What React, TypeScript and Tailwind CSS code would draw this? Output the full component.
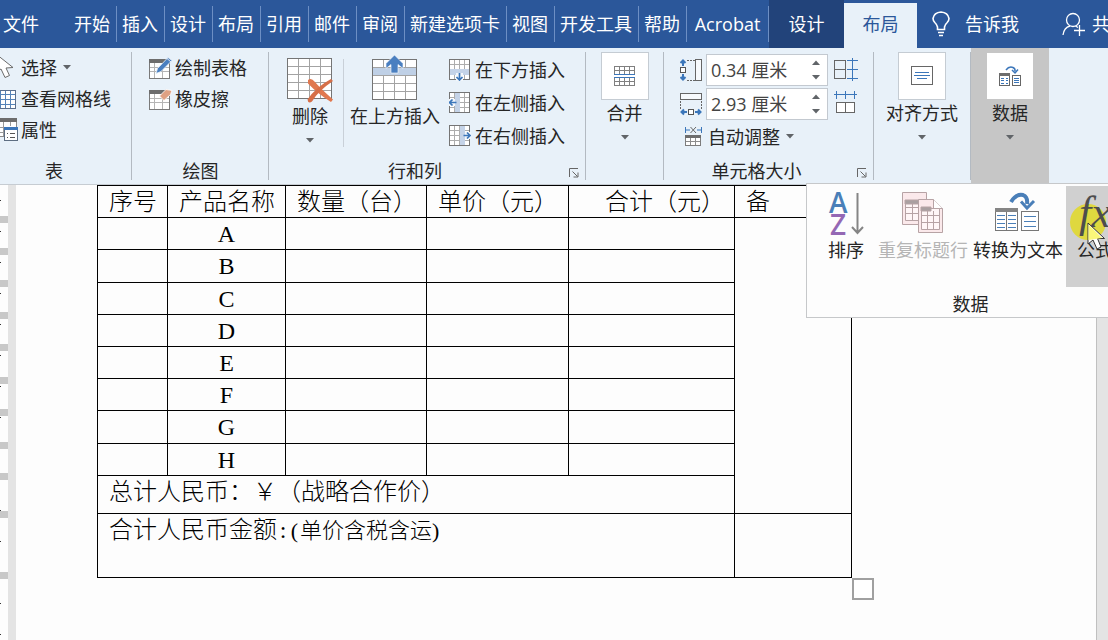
import type { ReactNode } from "react"

const tabs = ["开始", "插入", "设计", "布局", "引用", "邮件", "审阅", "新建选项卡", "视图", "开发工具", "帮助"]

const products = ["A", "B", "C", "D", "E", "F", "G", "H"]

// one entry per table row, the gray block below each is the row marker
const rulerRows = [
  "h-[31px]",
  "h-[25px]",
  "h-[25px]",
  "h-[25px]",
  "h-[25px]",
  "h-[26px]",
  "h-[25px]",
  "h-[26px]",
  "h-[24px]",
  "h-[31px]",
  "h-[54px]",
]

function Caret({ className = "" }: { className?: string }) {
  return (
    <svg width="8" height="5" viewBox="0 0 8 5" className={`shrink-0 fill-[#606468] ${className}`} aria-hidden="true">
      <path d="M0 0h8L4 4.5z" />
    </svg>
  )
}

function CursorIcon() {
  return (
    <svg width="18" height="22" viewBox="0 0 18 22" aria-hidden="true">
      <path d="M-4 -3L-4 15L1 12L5 20.500L9.500 18.500L6 11L13 10.500Z" fill="#fff" stroke="#6b6b6b" />
    </svg>
  )
}

function GridlinesIcon() {
  return (
    <svg width="18" height="20" viewBox="0 0 18 20" shapeRendering="crispEdges" aria-hidden="true">
      <path d="M-2 1.500H15.500V19.500H-2z" fill="#fff" stroke="#5b6f8c" />
      <path d="M0 5.500H15M0 10.500H15M0 15.500H15M0.500 2V19M5.500 2V19M10.500 2V19" stroke="#5583b8" fill="none" />
    </svg>
  )
}

function PropertiesIcon() {
  return (
    <svg width="18" height="23" viewBox="0 0 18 23" shapeRendering="crispEdges" aria-hidden="true">
      <path d="M-2 0.500H16.500V18.500H-2z" fill="#fff" stroke="#8a8a8a" />
      <path d="M0 0H17V4H0z" fill="#6d6d6d" />
      <path d="M0 9.500H5M0 14.500H5M3.500 4V18M10.500 4V8" stroke="#9a9a9a" />
      <path d="M4.500 9.500H17.500V22.500H4.500z" fill="#fff" stroke="#5e6e82" />
      <path d="M4 9H18V12H4z" fill="#3b76ba" />
      <path d="M7 15.500H8M10 15.500H15M7 19.500H8M10 19.500H15" stroke="#555" />
    </svg>
  )
}

function DrawTableIcon({ tool }: { tool: "pen" | "eraser" }) {
  return (
    <svg width="24" height="24" viewBox="0 0 24 24" aria-hidden="true">
      <g shapeRendering="crispEdges">
        <path d="M0.500 3.500H20.500V22.500H0.500z" fill="#fff" stroke="#7a7a7a" />
        <path d="M0 3H21V7H0z" fill="#6d6d6d" />
        <path d="M1 15.500H20M5.500 7V22M13.500 7V22M1 11.500H20" stroke="#b5b5b5" />
      </g>
      {tool === "pen" ? (
        <>
          <path d="M7 17.500L8.500 12.500L19 1.500L23 4.500L12 15.500Z" fill="#4a7fc0" stroke="#e8f1f9" strokeWidth="0.800" />
          <path d="M18 2.500L22 6" stroke="#fff" strokeWidth="0.800" />
        </>
      ) : (
        <path d="M10.500 9L17 2.500L23 3.500L21.500 7.500L15 13.500Z" fill="#dfa183" stroke="#fff" strokeWidth="0.800" />
      )}
    </svg>
  )
}

function DeleteIcon() {
  return (
    <svg width="46" height="46" viewBox="0 0 46 46" aria-hidden="true">
      <g shapeRendering="crispEdges" fill="none">
        <path d="M0.500 1.500H44.500V41.500H0.500z" fill="#fff" stroke="#757575" />
        <path d="M1 9.500H44M1 17.500H44M1 25.500H44M1 33.500H44M11.500 2V41M22.500 2V41M33.500 2V41" stroke="#a3a3a3" />
      </g>
      <path d="M21 23Q24 20 28 25Q33 31 46 42.500L44 45Q31 37 21 26.500Z" fill="#e0784f" />
      <path d="M46 24Q31 34 25 44.500Q21 47 20.500 42.500Q29 30 44 22Z" fill="#d66f48" />
    </svg>
  )
}

function InsertAboveIcon() {
  return (
    <svg width="46" height="46" viewBox="0 0 46 46" aria-hidden="true">
      <g shapeRendering="crispEdges" fill="none">
        <path d="M0.500 4.500H44.500V44.500H0.500z" fill="#fff" stroke="#757575" />
        <path d="M1 12H44V20H1z" fill="#bfd0e6" />
        <path d="M1 12.500H44M1 20.500H44M1 28.500H44M1 36.500H44M11.500 5V12M33.500 5V12M11.500 20V44M22.500 20V44M33.500 20V44" stroke="#a3a3a3" />
      </g>
      <path d="M22.500 0L31 8.500V13.500L26 9.500V18H19V9.500L14 13.500V8.500Z" fill="#4a7fc0" stroke="#fff" strokeWidth="0.600" />
    </svg>
  )
}

function InsertIcon({ side }: { side: "below" | "left" | "right" }) {
  return (
    <svg width="22" height="22" viewBox="0 0 22 22" aria-hidden="true">
      <g shapeRendering="crispEdges" fill="none">
        <path d="M0.500 0.500H20.500V20.500H0.500z" fill="#fff" stroke="#757575" />
        <path d="M1 5.500H20M1 10.500H20M1 15.500H20M5.500 1V20M10.500 1V20M15.500 1V20" stroke="#adadad" />
        {side === "below" && <path d="M1 10H20V16H1z" fill="#c4d3e8" />}
        {side === "left" && <path d="M6 1H11V20H6z" fill="#c4d3e8" />}
        {side === "right" && <path d="M11 1H16V20H11z" fill="#c4d3e8" />}
      </g>
      <g fill="none" strokeLinejoin="miter">
        {side === "below" && (
          <>
            <path d="M7 14H14V22H7z" fill="#f3f7fb" />
            <path d="M10.500 14V21M7.500 18L10.500 21L13.500 18" stroke="#3b76ba" strokeWidth="1.700" />
          </>
        )}
        {side === "left" && (
          <>
            <path d="M0 7H6V14H0z" fill="#f3f7fb" />
            <path d="M7.500 10.500H0.500M3.500 7.500L0.500 10.500L3.500 13.500" stroke="#3b76ba" strokeWidth="1.700" />
          </>
        )}
        {side === "right" && (
          <>
            <path d="M16 7H22V14H16z" fill="#f3f7fb" />
            <path d="M14.500 10.500H21M18 7.500L21 10.500L18 13.500" stroke="#3b76ba" strokeWidth="1.700" />
          </>
        )}
      </g>
    </svg>
  )
}

function MergeIcon() {
  return (
    <svg width="22" height="22" viewBox="0 0 22 22" shapeRendering="crispEdges" fill="none" aria-hidden="true">
      <path d="M0.500 1.500H21M0.500 5.500H21M5.500 1V9M10.500 1V9M15.500 1V9M0.500 1V9M20.500 1V9" stroke="#808080" />
      <path d="M0.500 16.500H21M0.500 20.500H21M5.500 12V21M10.500 12V21M15.500 12V21M0.500 12V21M20.500 12V21" stroke="#808080" />
      <path d="M0 9.500H21M0 12.500H21" stroke="#3b76ba" />
    </svg>
  )
}

function AlignIcon() {
  return (
    <svg width="22" height="20" viewBox="0 0 22 20" shapeRendering="crispEdges" fill="none" aria-hidden="true">
      <path d="M0.500 0.500H21.500V18.500H0.500z" stroke="#666" />
      <path d="M4 6.500H18M3 9.500H19M6 12.500H16" stroke="#3b76ba" />
    </svg>
  )
}

function RowHeightIcon() {
  return (
    <svg width="22" height="23" viewBox="0 0 22 23" fill="none" aria-hidden="true">
      <g shapeRendering="crispEdges">
        <path d="M7 1.500H15M7 21.500H15" stroke="#666" strokeDasharray="2 1" />
        <path d="M15.500 0.500H21.500V21.500H15.500z" stroke="#666" fill="#f7fafd" />
        <path d="M0.500 8.500H5.500V13.500H0.500z" stroke="#555" fill="#fff" />
      </g>
      <path d="M3 7V1.500M0.500 4L3 1.500L5.500 4M3 15V20.500M0.500 18L3 20.500L5.500 18" stroke="#3b76ba" strokeWidth="2" />
    </svg>
  )
}

function ColWidthIcon() {
  return (
    <svg width="22" height="23" viewBox="0 0 22 23" fill="none" aria-hidden="true">
      <g shapeRendering="crispEdges">
        <path d="M0.500 0.500H21.500V6.500H0.500z" stroke="#666" fill="#f7fafd" />
        <path d="M0.500 8V16M21.500 8V16" stroke="#666" strokeDasharray="2 1" />
        <path d="M8.500 16.500H13.500V21.500H8.500z" stroke="#555" fill="#fff" />
      </g>
      <path d="M7 19H1.500M4 16.500L1.500 19L4 21.500M15 19H20.500M18 16.500L20.500 19L18 21.500" stroke="#3b76ba" strokeWidth="2" />
    </svg>
  )
}

function DistributeRowsIcon() {
  return (
    <svg width="24" height="24" viewBox="0 0 24 24" shapeRendering="crispEdges" fill="none" aria-hidden="true">
      <path d="M0.500 2.500H11.500V20.500H0.500zM0.500 11.500H11.500" stroke="#666" />
      <path d="M13 2.500H24M13 11.500H24M13 20.500H24M18.500 0V23" stroke="#3b76ba" />
    </svg>
  )
}

function DistributeColsIcon() {
  return (
    <svg width="24" height="24" viewBox="0 0 24 24" shapeRendering="crispEdges" fill="none" aria-hidden="true">
      <path d="M2.500 11.500H20.500V21.500H2.500zM11.500 11.500V21.500" stroke="#666" fill="#fff" />
      <path d="M0 3.500H23M2.500 0V8M11.500 0V8M20.500 0V8" stroke="#3b76ba" />
    </svg>
  )
}

function AutoFitIcon() {
  return (
    <svg width="17" height="20" viewBox="0 0 17 20" fill="none" aria-hidden="true">
      <path d="M0.500 0V6M16.500 0V6M1 3H5M12 3H16" stroke="#3b76ba" />
      <path d="M5.500 0L11 6M11 0L5.500 6" stroke="#666" />
      <g shapeRendering="crispEdges">
        <path d="M0.500 8.500H15.500V18.500H0.500z" fill="#fff" stroke="#7d7d7d" />
        <path d="M0 8H16V11H0z" fill="#6d6d6d" />
        <path d="M1 14.500H15M5.500 11V18M10.500 11V18" stroke="#8d8d8d" />
      </g>
    </svg>
  )
}

function DataIcon() {
  return (
    <svg width="22" height="22" viewBox="0 0 22 22" fill="none" aria-hidden="true">
      <path d="M7 5Q10 1 14 2.500Q16.500 3.500 16 6.500" stroke="#3b76ba" strokeWidth="1.500" />
      <path d="M13 5L16 8L19 4.500" stroke="#3b76ba" strokeWidth="1.500" />
      <g shapeRendering="crispEdges">
        <path d="M0.500 8.500H10.500V20.500H0.500z" stroke="#666" />
        <path d="M0 8H11V11H0z" fill="#6d6d6d" />
        <path d="M2 13.500H5M7 13.500H9M2 15.500H5M7 15.500H9M2 18.500H5M7 18.500H9" stroke="#3b76ba" />
        <path d="M13.500 10.500H21.500V20.500H13.500z" stroke="#666" />
        <path d="M15 13.500H20M15 15.500H20M15 17.500H20" stroke="#3b76ba" />
      </g>
    </svg>
  )
}

function SortIcon() {
  return (
    <svg width="36" height="46" viewBox="0 0 36 46" fill="none" aria-hidden="true">
      <text x="1" y="21" fontFamily="Open Sans" fontSize="28" fontWeight="600" fill="#4a7fb8">A</text>
      <text x="2" y="43" fontFamily="Open Sans" fontSize="28" fontWeight="600" fill="#9468b4">Z</text>
      <path d="M29.500 1V40M24 35L29.500 41L35 35" stroke="#858585" strokeWidth="2" />
    </svg>
  )
}

function RepeatHeaderIcon() {
  return (
    <svg width="42" height="42" viewBox="0 0 42 42" fill="#fbe9eb" aria-hidden="true">
      <g stroke="#b7a3a5">
        <path d="M0.500 0.500H24.500V32.500H0.500z" />
        <path d="M3.500 8.500H20V28.500H3.500zM3.500 15.500H20M3.500 21.500H20M10.500 12V28" fill="#fff6f7" />
        <path d="M3 8H17V12H3z" fill="#aaa0a1" />
        <path d="M16.500 7.500H31.500L40.500 16.500V40.500H16.500z" />
        <path d="M31.500 7.500V16.500H40.500" fill="#fff" />
        <path d="M19.500 16.500H37.500V37.500H19.500zM19.500 23.500H37.500M19.500 30.500H37.500M25.500 19V37M31.500 19V37" fill="#fff6f7" />
        <path d="M19 15H29V19H19z" fill="#aaa0a1" />
      </g>
    </svg>
  )
}

function ToTextIcon() {
  return (
    <svg width="46" height="40" viewBox="0 0 46 40" fill="none" aria-hidden="true">
      <path d="M16 10Q21 1.500 28 3Q33 5 32 12" stroke="#4a7fb8" strokeWidth="4" />
      <path d="M26 9.500L32 16L39 9" stroke="#4a7fb8" strokeWidth="3" />
      <g shapeRendering="crispEdges">
        <path d="M0.500 16.500H22.500V38.500H0.500zM11.500 20V38" stroke="#777" fill="#fff" />
        <path d="M0 16H23V20H0z" fill="#858585" />
        <path d="M2 23.500H10M13 23.500H21M2 27.500H10M13 27.500H21M2 31.500H10M13 31.500H21M2 35.500H10M13 35.500H21" stroke="#4a7fb8" />
        <path d="M26.500 19.500H43.500V38.500H26.500z" stroke="#777" fill="#fff" />
        <path d="M29 24.500H41M29 29.500H41M29 34.500H41" stroke="#4a7fb8" />
      </g>
    </svg>
  )
}

function BulbIcon() {
  return (
    <svg width="18" height="26" viewBox="0 0 18 26" fill="none" stroke="#fff" strokeWidth="1.600" aria-hidden="true">
      <path d="M5.500 18.500V16Q5 13.500 2.800 11.500Q1 9.500 1 7.500Q2 1.500 9 1Q16 1.500 17 7.500Q17 9.500 15.200 11.500Q13 13.500 12.500 16V18.500Z" />
      <path d="M6 21.500H12M7 24.500H11" />
    </svg>
  )
}

function ShareIcon() {
  return (
    <svg width="24" height="24" viewBox="0 0 24 24" fill="none" stroke="#fff" strokeWidth="1.300" aria-hidden="true">
      <circle cx="11" cy="8" r="6.500" />
      <path d="M1 23Q2 15.500 8 14M13.500 14L16 15.500M17.500 13V24M12 18.500H23" />
    </svg>
  )
}

function Group({ label, width, launcher, children }: { label?: string; width: string; launcher?: boolean; children: ReactNode }) {
  return (
    <section className={`flex shrink-0 flex-col ${width}`}>
      <div className="flex flex-1">
        <div className="flex-1">{children}</div>
        <div className="-mb-[22px] mt-1 w-px bg-[#b3bac2]" />
      </div>
      {label && (
        <div className="flex h-[26px] items-center">
          <div className="flex-1 text-center">{label}</div>
          {launcher && (
            <button aria-label={`${label}设置`} className="mt-1 mr-[7px] pl-2">
              <svg width="10" height="10" viewBox="0 0 10 10" fill="none" stroke="#666" aria-hidden="true">
                <path d="M0.500 9V0.500H9M3.500 3.500L8.500 8.500M9 4.500V9H4.500" />
              </svg>
            </button>
          )}
        </div>
      )}
    </section>
  )
}

function SmallButton({ icon, iconWidth, label, caret }: { icon: ReactNode; iconWidth: string; label: string; caret?: boolean }) {
  return (
    <button className="flex h-[31px] items-center">
      <span className={`flex shrink-0 ${iconWidth}`}>{icon}</span>
      <span>{label}</span>
      {caret && <Caret className="ml-[6px]" />}
    </button>
  )
}

function TileButton({ icon, label, active }: { icon: ReactNode; label: string; active?: boolean }) {
  return (
    <button className="flex w-full flex-col items-center pt-1">
      <span className={`flex size-12 items-center justify-center border bg-white ${active ? "border-[#c6c6c6]" : "border-[#c5ccd3]"}`}>
        {icon}
      </span>
      <span className="h-7 leading-[26px]">{label}</span>
      <Caret className="mt-[7px]" />
    </button>
  )
}

function SizeField({ icon, label, value }: { icon: ReactNode; label: string; value: string }) {
  return (
    <div className="flex h-8 items-center">
      <span className="w-[26px]">{icon}</span>
      <div className="flex h-8 w-[122px] border border-[#c3c9d0] bg-white">
        <input aria-label={label} defaultValue={value} className="min-w-0 flex-1 bg-transparent pl-1 text-[#444] outline-none" />
        <div className="flex w-[22px] flex-col items-center justify-center gap-[10px]">
          <button aria-label={`增加${label}`}>
            <Caret className="block rotate-180" />
          </button>
          <button aria-label={`减少${label}`}>
            <Caret className="block" />
          </button>
        </div>
      </div>
    </div>
  )
}

function MenuItem({ icon, label, disabled, className = "w-[94px]" }: { icon: ReactNode; label: string; disabled?: boolean; className?: string }) {
  return (
    <button disabled={disabled} className={`relative flex h-[101px] shrink-0 flex-col items-center ${disabled ? "text-[#b5b5b5]" : ""} ${className}`}>
      <span className="flex h-[51px] items-start pt-[6px]">{icon}</span>
      <span className="leading-[26px] whitespace-nowrap">{label}</span>
    </button>
  )
}

function DataMenu() {
  return (
    <div className="absolute top-[135px] -left-[165px] z-10 border border-[#c6c8ca] bg-[#fdfdfd] pt-[2px]">
      <div className="flex gap-px px-[10px]">
        <MenuItem icon={<SortIcon />} label="排序" className="w-[58px]" />
        <MenuItem icon={<RepeatHeaderIcon />} label="重复标题行" disabled />
        <MenuItem icon={<ToTextIcon />} label="转换为文本" />
        <MenuItem
          icon={
            <>
              <span className="absolute top-[18px] left-1 size-9 rounded-full bg-[#dfd83f]" />
              <span className="relative font-['Liberation_Serif',serif] text-[44px] leading-[42px] text-[#4d4d4d] italic">fx</span>
              <svg width="20" height="30" viewBox="0 0 20 30" className="absolute top-9 left-[21px] z-10" aria-hidden="true">
                <path d="M1 1V22L6 18L10 27L14 25L10.500 16.500H17.500Z" fill="#fff" stroke="#333" />
                <path d="M1.500 2.500L15 16L1.500 18Z" fill="#faf77a" />
              </svg>
            </>
          }
          label="公式"
          className="w-[58px] bg-[#d0d0d0]"
        />
      </div>
      <div className="mt-[4px] h-[26px] text-center leading-[26px]">数据</div>
    </div>
  )
}

function TabBar() {
  return (
    <nav className="flex h-12 overflow-hidden bg-[#2b579a] whitespace-nowrap text-white">
      <button className="w-[69px] shrink-0 pl-[3px] text-left">文件</button>
      {tabs.map((tab) => (
        <button key={tab} className="my-[6px] shrink-0 border-r border-[#6d8fc4] pr-[6px] pl-[5px]">
          {tab}
        </button>
      ))}
      <button className="my-[6px] w-[82px] shrink-0 border-r border-[#6d8fc4]">Acrobat</button>
      <button className="w-[75px] shrink-0 bg-[#22437a]">设计</button>
      <button className="mt-[3px] w-[73px] shrink-0 bg-[#e8f1f9] pb-[3px] text-[#2b579a]">布局</button>
      <button className="ml-[15px] flex shrink-0 items-center gap-[15px]">
        <BulbIcon />
        告诉我
      </button>
      <button className="ml-auto flex w-[46px] shrink-0 items-center gap-[6px]">
        <span className="shrink-0">
          <ShareIcon />
        </span>
        共享
      </button>
    </nav>
  )
}

function Ribbon() {
  return (
    <div className="flex h-[137px] border-b border-[#c6ccd2] bg-[#e8f1f9] whitespace-nowrap">
      <Group label="表" width="w-[132px] [&>div:last-child]:pr-6">
        <div className="flex flex-col items-start pt-1">
          <SmallButton icon={<CursorIcon />} iconWidth="w-[21px]" label="选择" caret />
          <SmallButton icon={<GridlinesIcon />} iconWidth="w-[21px]" label="查看网格线" />
          <SmallButton icon={<PropertiesIcon />} iconWidth="w-[21px]" label="属性" />
        </div>
      </Group>
      <Group label="绘图" width="w-[137px]">
        <div className="flex flex-col items-start pt-1 pl-[17px]">
          <SmallButton icon={<DrawTableIcon tool="pen" />} iconWidth="w-[26px]" label="绘制表格" />
          <SmallButton icon={<DrawTableIcon tool="eraser" />} iconWidth="w-[26px]" label="橡皮擦" />
        </div>
      </Group>
      <Group label="行和列" width="w-[317px]" launcher>
        <div className="flex pl-[18px]">
          <button className="flex w-[46px] flex-col items-center pt-[9px]">
            <DeleteIcon />
            <span className="h-7 leading-[26px]">删除</span>
            <Caret className="mt-[7px]" />
          </button>
          <div className="mt-[11px] ml-[10px] h-[88px] w-px bg-[#c9d0d8]" />
          <button className="ml-[6px] flex w-[90px] flex-col items-center pt-[7px]">
            <InsertAboveIcon />
            <span className="mt-[2px] h-7 leading-[26px]">在上方插入</span>
          </button>
          <div className="ml-[9px] flex flex-col gap-[2px] pt-[6px]">
            <SmallButton icon={<InsertIcon side="below" />} iconWidth="w-[26px]" label="在下方插入" />
            <SmallButton icon={<InsertIcon side="left" />} iconWidth="w-[26px]" label="在左侧插入" />
            <SmallButton icon={<InsertIcon side="right" />} iconWidth="w-[26px]" label="在右侧插入" />
          </div>
        </div>
      </Group>
      <Group label=" " width="w-[78px]">
        <TileButton icon={<MergeIcon />} label="合并" />
      </Group>
      <Group label="单元格大小" width="w-[210px]" launcher>
        <div className="flex gap-[6px] pt-[6px] pl-4">
          <div>
            <div className="flex flex-col gap-[2px]">
              <SizeField icon={<RowHeightIcon />} label="高度" value="0.34 厘米" />
              <SizeField icon={<ColWidthIcon />} label="宽度" value="2.93 厘米" />
            </div>
            <div className="pt-px pl-[5px]">
              <SmallButton icon={<AutoFitIcon />} iconWidth="w-[23px]" label="自动调整" caret />
            </div>
          </div>
          <div className="flex flex-col">
            <button aria-label="分布行" className="flex h-8 items-center">
              <DistributeRowsIcon />
            </button>
            <button aria-label="分布列" className="flex h-[34px] items-center">
              <DistributeColsIcon />
            </button>
          </div>
        </div>
      </Group>
      <Group label=" " width="w-[97px]">
        <TileButton icon={<AlignIcon />} label="对齐方式" />
      </Group>
      <div className="relative w-[78px] shrink-0 bg-[#c6c6c6]">
        <TileButton icon={<DataIcon />} label="数据" active />
        <DataMenu />
      </div>
    </div>
  )
}

function Ruler() {
  return (
    <div className="relative w-2 shrink-0 overflow-hidden bg-[#fdfdfd]" aria-hidden="true">
      <div className="absolute top-[15px] left-0 flex flex-col gap-[30px]">
        {Array.from({ length: 15 }, (_, i) => (
          <span key={i} className="h-px w-px bg-[#333]" />
        ))}
      </div>
      <div className="relative">
        {rulerRows.map((height, i) => (
          <div key={i}>
            <div className={height} />
            <div className="h-[7px] bg-[#c8c8c8]" />
          </div>
        ))}
      </div>
    </div>
  )
}

function DocumentTable() {
  return (
    <div className="relative w-fit font-['Liberation_Serif','Noto_Sans_CJK_SC',serif] text-2xl font-light text-black">
      <table className="w-[755px] table-fixed border-collapse leading-[30px] [&_td]:border [&_td]:border-black [&_td]:p-0 [&_th]:border [&_th]:border-black [&_th]:p-0 [&_th]:font-light">
        <colgroup>
          <col className="w-[70px]" />
          <col className="w-[118px]" />
          <col className="w-[141px]" />
          <col className="w-[142px]" />
          <col className="w-[166px]" />
          <col className="w-[117px]" />
        </colgroup>
        <thead>
          <tr className="h-8 text-left whitespace-nowrap">
            <th><span className="pl-[11px]">序号</span></th>
            <th><span className="pl-[11px]">产品名称</span></th>
            <th><span className="pl-[11px]">数量（台）</span></th>
            <th><span className="pl-[11px]">单价（元）</span></th>
            <th><span className="pl-9">合计（元）</span></th>
            <th><span className="pl-[11px]">备</span></th>
          </tr>
        </thead>
        <tbody>
          {products.map((name, i) => (
            <tr key={name} className={i === 1 || i === 6 ? "h-[33px]" : "h-8"}>
              <td />
              <td className="text-center">{name}</td>
              <td />
              <td />
              <td />
              {i === 0 && <td rowSpan={9} />}
            </tr>
          ))}
          <tr className="h-[38px] align-top">
            <td colSpan={5}>
              <div className="pl-[11px] leading-8">总计人民币：￥（战略合作价）</div>
            </td>
          </tr>
          <tr className="h-16 align-top">
            <td colSpan={5}>
              <div className="pl-[11px] leading-8">
                合计人民币金额<span className="inline-block w-3 text-center">:</span>
                <span className="text-[22px]">
                  <span className="inline-block w-[11px] text-center">(</span>单价含税含运)
                </span>
              </div>
            </td>
            <td />
          </tr>
        </tbody>
      </table>
      <div className="absolute top-full left-full size-[22px] border-2 border-[#a0a0a0] bg-white" />
    </div>
  )
}

export default function App() {
  return (
    <div className="flex min-h-screen flex-col overflow-hidden bg-[#e4e4e4] font-['Open_Sans','Noto_Sans_CJK_SC',sans-serif] text-lg leading-[26px] text-[#262626]">
      <TabBar />
      <Ribbon />
      <main className="flex flex-1">
        <Ruler />
        <div className="w-2 shrink-0 bg-[#e4e4e4]" />
        <div className="mr-[11px] flex-1 border-r border-[#c0c0c0] bg-[#fdfdfd] pl-[81px]">
          <DocumentTable />
        </div>
      </main>
    </div>
  )
}
